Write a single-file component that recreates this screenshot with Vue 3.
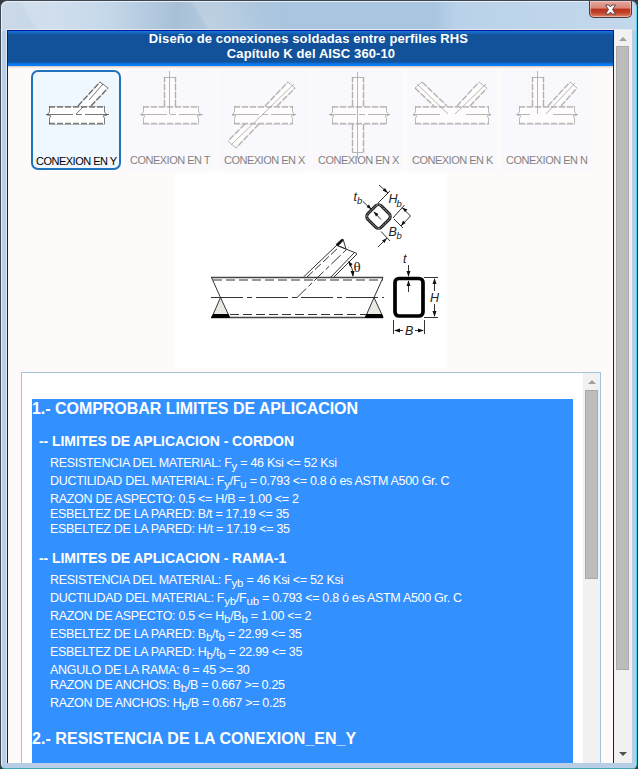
<script setup>
const tabs = [
  { label: 'CONEXION EN Y', active: true, box: [18, 74], solid: 'M69 12L77 18M45 44L52 37M72 14L58 30', dash: 'M47 36L69 12M60 36L77 18', fill: 'M47 36L69 12L77 18L60 36Z', axis: 'M15 44H78' },
  { label: 'CONEXION EN T', box: [18, 74], solid: 'M39 7.500H50.500M44.500 1V44', dash: 'M39.500 36V7M50.500 36V7', fill: 'M39 7H50V36H39Z', axis: 'M15 44H78' },
  { label: 'CONEXION EN X', box: [15, 74], solid: 'M69 12L76 18M9 71L17 78M12 75L75 14', dash: 'M46 36L69 12M58 36L76 18M26 54L9 71M40 54L17 78', fill: 'M46 36L69 12L76 18L17 78L9 71Z', axis: 'M13 44H77' },
  { label: 'CONEXION EN X', box: [19, 74], solid: 'M39 7.500H50.500M39 82.500H50.500M44.500 2V88', dash: 'M39.500 36V7M50.500 36V7M39.500 54V82M50.500 54V82', fill: 'M39 7H50V82H39Z', axis: 'M16 44H77' },
  { label: 'CONEXION EN K', box: [8, 82], solid: 'M8 18L15 12M10 14L41 44M72 12L80 18M48 44L79 14', dash: 'M8 18L27 36M15 12L40 36M50 36L72 12M63 36L80 18', fill: 'M8 18L15 12L40 36H27ZM50 36L72 12L80 18L63 36Z', axis: 'M6 44H33M59 44H83' },
  { label: 'CONEXION EN N', box: [18, 74], solid: 'M31 7.500H42.500M36.500 1V44M69 12L76 18M45 44L74 13', dash: 'M31.500 36V7M42.500 36V7M47 36L69 12M60 36L76 18', fill: 'M31 7H42V36H31ZM47 36L69 12L76 18L60 36Z', axis: 'M15 44H29M52 44H77' },
]

const chord = [
  { html: 'RESISTENCIA DEL MATERIAL: F<sub>y</sub> = 46 Ksi &lt;= 52 Ksi', sub: true },
  { html: 'DUCTILIDAD DEL MATERIAL: F<sub>y</sub>/F<sub>u</sub> = 0.793 &lt;= 0.8 ó es ASTM A500 Gr. C', sub: true },
  { html: 'RAZON DE ASPECTO: 0.5 &lt;= H/B = 1.00 &lt;= 2' },
  { html: 'ESBELTEZ DE LA PARED: B/t = 17.19 &lt;= 35' },
  { html: 'ESBELTEZ DE LA PARED: H/t = 17.19 &lt;= 35' },
]

const branch = [
  { html: 'RESISTENCIA DEL MATERIAL: F<sub>yb</sub> = 46 Ksi &lt;= 52 Ksi', sub: true },
  { html: 'DUCTILIDAD DEL MATERIAL: F<sub>yb</sub>/F<sub>ub</sub> = 0.793 &lt;= 0.8 ó es ASTM A500 Gr. C', sub: true },
  { html: 'RAZON DE ASPECTO: 0.5 &lt;= H<sub>b</sub>/B<sub>b</sub> = 1.00 &lt;= 2', sub: true },
  { html: 'ESBELTEZ DE LA PARED: B<sub>b</sub>/t<sub>b</sub> = 22.99 &lt;= 35', sub: true },
  { html: 'ESBELTEZ DE LA PARED: H<sub>b</sub>/t<sub>b</sub> = 22.99 &lt;= 35', sub: true },
  { html: 'ANGULO DE LA RAMA: θ = 45 &gt;= 30' },
  { html: 'RAZON DE ANCHOS: B<sub>b</sub>/B = 0.667 &gt;= 0.25', sub: true },
  { html: 'RAZON DE ANCHOS: H<sub>b</sub>/B = 0.667 &gt;= 0.25', sub: true },
]
</script>

<template>
  <div class="window">
    <div class="titlebar">
      <button class="close" aria-label="Cerrar">
        <svg width="13" height="11" viewBox="0 0 13 11">
          <path d="M1.500 1H5L6.500 3L8 1H11.500L8.500 5.500L11.500 10H8L6.500 8L5 10H1.500L4.500 5.500Z" fill="#fff" stroke="#5c4650" stroke-width="1" />
        </svg>
      </button>
    </div>

    <div class="client">
      <main class="page">
        <header class="banner">
          <div>Diseño de conexiones soldadas entre perfiles RHS</div>
          <div class="sub-title">Capítulo K del AISC 360-10</div>
        </header>

        <nav class="tabs">
          <div v-for="(t, i) in tabs" :key="i" class="tab" :class="{ active: t.active }">
            <svg class="thumb" width="90" height="100" viewBox="0 0 90 100" fill="none" stroke="#4a4846">
              <path :d="t.fill" fill="#fff" stroke="none" />
              <path :d="`M${t.box[0]} 36H${t.box[1]}V54H${t.box[0]}Z`" fill="#fff" stroke="none" />
              <g stroke-width="1.500" stroke-dasharray="6 2" opacity=".7">
                <path :d="`M${t.box[0]} 37H${t.box[1]}M${t.box[0]} 53.500H${t.box[1]}`" />
                <path :d="t.dash" />
              </g>
              <path :d="`M${t.box[0]} 36.500H${t.box[1]}M${t.box[0]} 54.500H${t.box[1]}`" stroke-width=".6" opacity=".5" />
              <path :d="t.dash" stroke-width=".6" opacity=".6" />
              <path :d="`M${t.box[0] + .5} 36V42L${t.box[0] - 2} 45L${t.box[0] + 2} 46L${t.box[0] + .5} 48V54M${t.box[1] - .5} 36V42L${t.box[1] + 2} 45L${t.box[1] - 2} 46L${t.box[1] - .5} 48V54`" opacity=".7" />
              <path :d="t.axis" transform="translate(0 .5)" stroke-dasharray="27 3 6 3" opacity=".75" />
              <path :d="t.solid" opacity=".75" />
            </svg>
            <span class="label">{{ t.label }}</span>
          </div>
        </nav>

        <figure class="figure">
          <svg width="272" height="196" viewBox="175 172 272 196" fill="none" stroke="#333" stroke-width="1">
            <path d="M211 277.500H383M211 317.500H383" stroke="#444" stroke-width="1.300" />
            <path d="M213 280H383M230 314.500H366" stroke-dasharray="9 4" />
            <path d="M211 297.500H384" stroke-dasharray="32 4 5 4" />
            <path d="M211.500 277.500L220.500 297.500M383 277.500L374 297.500" />
            <path d="M220.500 297.500L212 317H229.500ZM374 297.500L365.500 317H383Z" fill="#e9e9e3" />
            <path d="M211 318L213 314H228.500L230 318ZM364.500 318L366.500 314H382L383.500 318Z" fill="#000" stroke="none" />
            <path d="M303.500 277L337 245M331 277L354 253M334 277L357 254" />
            <path d="M307 277L339 247" stroke-dasharray="8 3" />
            <path d="M297 297.500L349 247" stroke-dasharray="13 3 5 3" />
            <path d="M336 245L343 239L346 249ZM336 245L357 253.500" />
            <path d="M336 244.500L342 239L343 240.500L338 246Z" fill="#000" />
            <path d="M348.500 262C351.500 266 353 270 353 276" />
            <path d="M348 261L352.500 264L350 267ZM353 277L350.500 271H354.500Z" fill="#111" stroke="none" />

            <rect x="369" y="207" width="19" height="19" rx="4" transform="rotate(45 378.500 216.500)" stroke="#222" stroke-width="3" />
            <rect x="369" y="207" width="19" height="19" rx="4" transform="rotate(45 378.500 216.500)" stroke="#ccc" stroke-width=".8" stroke-dasharray="2 1" />
            <path d="M363 201.500L371.500 209.500M374 212L381 219.500M379 185L388 193M378 203L390 191M378 247L387 238M381 231.500L390 241M393 218L404.500 205M394 219L403 228M402 207.500L410.500 216L401 226" />
            <path d="M371.500 209.500L366.500 207L369 204.500ZM373.500 211.500L378.500 214L376 216.500ZM388 193L382.500 190.500L385 188ZM387 238L384.500 243L382 240.500ZM402 207.500L407.500 209.500L405 212ZM401 226L403 220.500L405.500 223Z" fill="#111" stroke="none" />

            <rect x="395" y="278.500" width="28" height="37.500" rx="4" stroke="#000" stroke-width="3.700" />
            <path d="M408.500 265V276M408.500 281V292M424 277.500H438M424 317.500H438M434.500 279V291M434.500 304V316M393.500 320V334M424.500 320V334M395 330.500H403M415 330.500H423" />
            <path d="M408.500 277L406.500 271H410.500ZM408.500 280.500L406.500 286H410.500ZM434.500 278L432.500 284H436.500ZM434.500 317L432.500 311H436.500ZM394 330.500L400 328.500V332.500ZM424 330.500L418 328.500V332.500Z" fill="#111" stroke="none" />
            <g class="sym">
              <text x="353.500" y="200.500">t</text><text class="small" x="357" y="203.500">b</text>
              <text x="388.500" y="202.500">H</text><text class="small" x="396.500" y="206.500">b</text>
              <text x="388.500" y="235.500">B</text><text class="small" x="396.500" y="238.500">b</text>
              <text x="403" y="262.500">t</text>
              <text x="430" y="302">H</text>
              <text x="405" y="335">B</text>
              <text class="theta" x="353.500" y="272">θ</text>
            </g>
          </svg>
        </figure>

        <section class="report">
          <div class="report-body">
            <div class="selection">
              <h1>1.- COMPROBAR LIMITES DE APLICACION</h1>
              <h2>-- LIMITES DE APLICACION - CORDON</h2>
              <p v-for="(r, i) in chord" :key="'c' + i" :class="{ tall: r.sub }"><span v-html="r.html" /></p>
              <h2 class="second">-- LIMITES DE APLICACION - RAMA-1</h2>
              <p v-for="(r, i) in branch" :key="'r' + i" :class="{ tall: r.sub }"><span v-html="r.html" /></p>
              <h1 class="next">2.- RESISTENCIA DE LA CONEXION_EN_Y</h1>
            </div>
          </div>
          <div class="scrollbar inner">
            <i class="arrow up"></i>
            <div class="knob"></div>
          </div>
        </section>
      </main>

      <div class="scrollbar outer">
        <i class="arrow up"></i>
        <div class="knob"></div>
        <i class="arrow down"></i>
      </div>
    </div>
  </div>
</template>

<style>
body { margin: 0; background: #33393d; overflow: hidden; }
</style>

<style scoped>
* { box-sizing: border-box; }
.window {
  width: 638px; height: 769px; padding: 0 5px 5px 5px;
  display: flex; flex-direction: column;
  border: 1px solid #3d4650; border-right: 1px solid #153f4c; border-bottom-color: #40a5b5;
  border-radius: 7px 7px 5px 5px;
  background:
    linear-gradient(60deg, rgba(175, 200, 222, .25) 0 30px, transparent 34px) 0 0 / 100% 30px no-repeat,
    linear-gradient(60deg, transparent 0 178px, rgba(255, 255, 255, .16) 182px, transparent 240px) 0 0 / 100% 30px no-repeat,
    linear-gradient(90deg, #d3dfeb 0, #cfdeed 60px, #c4d7ea 110px, #a8c0d7 175px, #b2c8dd 210px, #a9c5df 290px, #a9c6e0 435px, #bad2e9 455px, #c3d8ec 638px) 0 0 / 100% 30px no-repeat,
    #b8cee6;
  box-shadow: inset 1px 1px 0 #e9f1f8, inset -1px 0 0 #4ed3ed;
  font-family: "Liberation Sans", Arial, sans-serif;
}
.titlebar { height: 28px; flex: none; display: flex; justify-content: flex-end; }
.close {
  width: 43px; height: 17px; padding: 0; display: flex; align-items: center; justify-content: center;
  border: 1px solid #4c3a42; border-top: 0; border-radius: 0 0 5px 5px;
  background: linear-gradient(#e5aaa0 0, #d98476 45%, #b7301c 50%, #c3452c 75%, #df866a 100%);
  box-shadow: inset 0 0 0 1px rgba(255, 220, 210, .5);
}
.client { flex: 1; min-height: 0; display: flex; border-top: 1px solid #e5ecee; border-left: 1px solid #dce8f4; background: #fff; width: 626px; }
.page { width: 607px; overflow: hidden; display: flex; flex-direction: column; background: #fefafa; border: solid #0a149c; border-width: 1px 1px 0 1px; }
.banner {
  flex: none; height: 35px; color: #fff; text-align: center;
  font-weight: bold; font-size: 13px; line-height: 15px; padding-right: 4px; letter-spacing: .12px;
  background: linear-gradient(#1878e0 0, #11529a 4px, #11529a 31px, #087bf4 33px, #087bf4 35px);
  box-shadow: 0 1px 2px #cbbfb8;
}
.sub-title { letter-spacing: .1px; padding-left: 5px; }
.tabs { flex: none; display: flex; gap: 4px; padding: 4px 0 0 23px; }
.tab { width: 90px; height: 100px; display: grid; background: #f6f8fe; color: #000; opacity: .5; }
.tab > * { grid-area: 1 / 1; }
.tab.active { opacity: 1; background: #f0f8ff; border: 2px solid #1d74bc; border-radius: 7px; }
.tab.active .thumb { margin: -2px; }
.label { align-self: end; padding: 0 0 3px 5px; font-size: 11px; line-height: 14px; white-space: nowrap; letter-spacing: -.5px; }
.active .label { padding: 0 0 0 3px; }
.figure { flex: none; margin: 2px 0 0 167px; width: 272px; height: 196px; background: #fff; }
.figure svg { display: block; }
.sym { fill: #222; stroke: none; font: italic 12.500px "Liberation Sans", Arial, sans-serif; }
.sym .small { font-size: 9.500px; }
.sym .theta { font: 15px "Liberation Serif", serif; }
.report { flex: none; width: 580px; height: 400px; margin: 4px 0 0 13px; border: 1px solid #a6c3dd; background: #fff; display: flex; justify-content: space-between; }
.report-body { padding: 26px 0 0 10px; }
.selection { width: 541px; height: 380px; padding-top: 1px; background: #3390ff; color: #fff; white-space: nowrap; }
h1, h2, p { margin: 0; }
h1 { font-size: 16px; line-height: 18px; letter-spacing: -.04px; }
h2 { font-size: 14px; line-height: 16px; padding-left: 7px; margin: 15px 0 7px; letter-spacing: -.06px; }
h2.second { margin: 13px 0 7px; }
h1.next { margin-top: 16px; letter-spacing: .05px; }
p { padding-left: 18px; height: 15px; font-size: 12.500px; line-height: 15px; letter-spacing: -.3px; }
p.tall { height: 18px; }
p :deep(sub) { font-size: 11.500px; line-height: 0; vertical-align: -3px; letter-spacing: -.2px; }
.scrollbar { display: flex; flex-direction: column; align-items: center; background: #f1f1f1; }
.scrollbar .knob { width: 13px; background: #bcbcbc; border: 1px solid #aaa; }
.inner { width: 17px; }
.outer { width: 18px; padding-right: 1px; }
.inner .knob { height: 189px; margin-top: 6px; }
.outer .knob { height: 624px; margin-top: 5px; }
.arrow { width: 0; height: 0; border: solid transparent; border-width: 0 4px; }
.arrow.up { border-bottom: 4px solid #a0a0a0; margin-top: 7px; }
.arrow.down { border-top: 4px solid #505050; margin: auto 0 7px; }
</style>
